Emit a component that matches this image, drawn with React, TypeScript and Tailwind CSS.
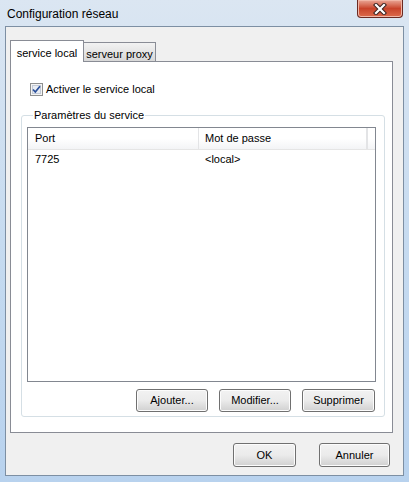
import React from 'react'

const ui = { fontFamily: '"Liberation Sans", Arial, sans-serif' }

function Btn({ label, className = '' }: { label: string; className?: string }) {
  return (
    <button
      className={
        'flex items-center justify-center rounded-[3px] border border-[#707070] bg-gradient-to-b from-[#f2f2f2] via-[#ebebeb] to-[#d0d0d0] text-[11px] text-black shadow-[inset_0_0_0_1px_#fcfcfc] ' +
        className
      }
    >
      {label}
    </button>
  )
}

function CheckBox() {
  return (
    <svg width="13" height="13" viewBox="0 0 13 13">
      <rect x="0.5" y="0.5" width="12" height="12" fill="#f4f4f4" stroke="#8e8f8f" />
      <rect x="2.5" y="2.5" width="8" height="8" fill="#e8ecf3" stroke="#c3cad6" />
      <path d="M3 6.5 L5.3 9 L10 3.2" fill="none" stroke="#2a4f9a" strokeWidth="1.7" />
    </svg>
  )
}

function CloseGlyph() {
  return (
    <svg width="14" height="12" viewBox="0 0 14 12">
      <path d="M3 2 L11 10 M11 2 L3 10" stroke="#3b2220" strokeWidth="4.2" strokeLinecap="square" />
      <path d="M3 2 L11 10 M11 2 L3 10" stroke="#ffffff" strokeWidth="2.2" strokeLinecap="square" />
    </svg>
  )
}

export default function App() {
  return (
    <div
      className="flex h-[482px] w-[409px] flex-col bg-gradient-to-b from-[#dbe6f2] via-[#c6dbf0] to-[#b8d2ee] text-black"
      style={ui}
    >
      {/* Title bar */}
      <div className="flex h-[26px] shrink-0 items-start justify-between">
        <span className="pl-[7px] pt-[5px] text-[12px] text-black">Configuration réseau</span>
        <div className="mr-[6px] flex h-[18px] w-[46px] items-center justify-center rounded-b-[4px] border border-t-0 border-[#6b2a22] bg-gradient-to-b from-[#e9a696] via-[#c8432a] to-[#dc6a4c] shadow-[inset_0_0_0_1px_#f1b6a6]">
          <CloseGlyph />
        </div>
      </div>

      {/* Client area */}
      <div className="mx-[5px] mb-[6px] flex flex-1 flex-col border border-[#7d8fa3] bg-[#f0f0f0] px-[4px] pt-[13px]">
        {/* Tabs */}
        <div className="relative z-10 flex h-[21px] items-end">
          <div className="-mb-px flex h-[22px] w-[74px] items-start justify-center border border-b-0 border-[#898c95] bg-white pt-[4px] text-[11px]">
            service local
          </div>
          <div className="flex h-[19px] w-[72px] items-start justify-center border border-l-0 border-b-0 border-[#898c95] bg-gradient-to-b from-[#f2f2f2] to-[#d8d8d8] pt-[3px] text-[11px]">
            serveur proxy
          </div>
        </div>

        {/* Tab panel */}
        <div className="mr-[6px] flex h-[372px] flex-col border border-[#898c95] bg-white pl-[10px] pr-[7px] pt-[21px]">
          <div className="flex h-[13px] items-center gap-[3px] pl-[9px] text-[11px]">
            <CheckBox />
            <span>Activer le service local</span>
          </div>

          <fieldset className="mt-[13px] flex h-[308px] flex-col rounded-[3px] border border-[#d5dfe5] px-[5px] pb-[9px]">
            <legend className="ml-[6px] px-[1px] text-[11px] leading-[13px]">Paramètres du service</legend>
            <div className="mr-[3px] mt-[5px] flex h-[255px] flex-col border border-[#828790] bg-white">
              <div className="flex h-[22px] border-b border-[#e5e5e5] bg-gradient-to-b from-white via-white to-[#f3f4f6] text-[11px]">
                <div className="flex w-[171px] items-center border-r border-[#e3e4e6] pl-[7px]">Port</div>
                <div className="flex w-[169px] items-center border-r-2 border-[#e3e4e6] pl-[6px]">Mot de passe</div>
                <div className="flex-1" />
              </div>
              <div className="flex h-[19px] items-center text-[11px]">
                <div className="w-[171px] pl-[7px]">7725</div>
                <div className="pl-[6px]">&lt;local&gt;</div>
              </div>
            </div>
            <div className="mr-[4px] mt-[7px] flex justify-end gap-[11px]">
              <Btn label="Ajouter..." className="h-[23px] w-[72px]" />
              <Btn label="Modifier..." className="h-[23px] w-[72px]" />
              <Btn label="Supprimer" className="h-[23px] w-[73px]" />
            </div>
          </fieldset>
        </div>

        {/* Dialog buttons */}
        <div className="mr-[9px] mt-[10px] flex justify-end gap-[23px]">
          <Btn label="OK" className="h-[24px] w-[63px]" />
          <Btn label="Annuler" className="h-[24px] w-[71px]" />
        </div>
      </div>
    </div>
  )
}
